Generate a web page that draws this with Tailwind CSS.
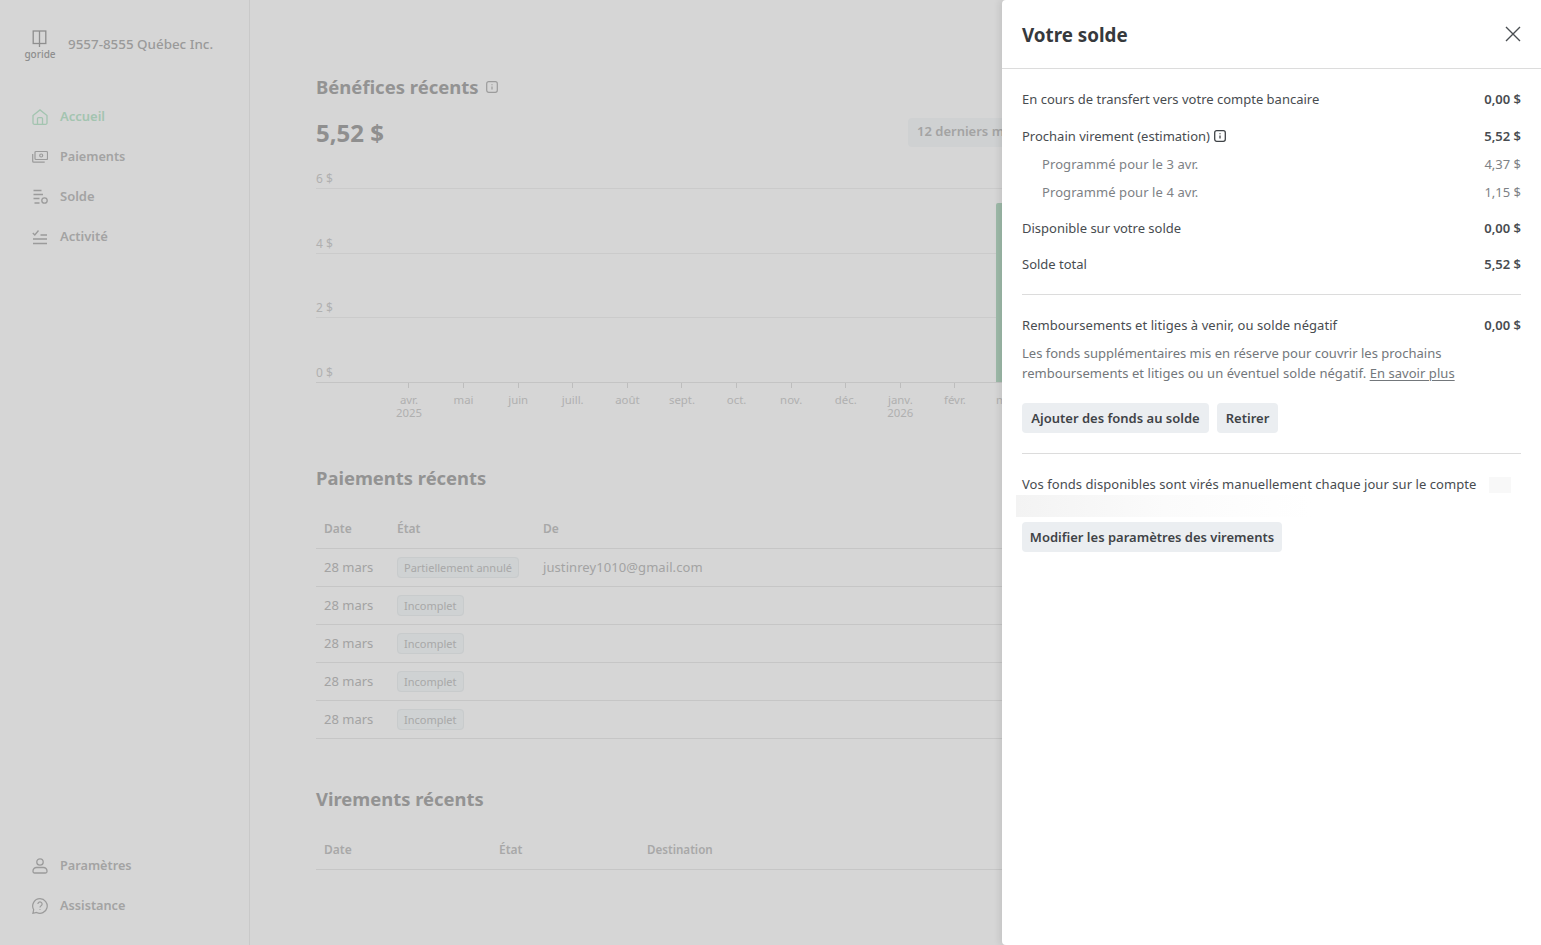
<!DOCTYPE html>
<html lang="fr">
<head>
  <meta charset="UTF-8" />
  <title>Votre solde</title>
  <meta name="viewport" content="width=device-width, initial-scale=1.0" />
  <script src="https://cdn.jsdelivr.net/npm/@tailwindcss/browser@4"></script>
</head>
<body class="h-[945px] overflow-hidden bg-[#d6d6d6] font-['Noto_Sans',sans-serif] text-[13px] text-[#a3a3a3]">
  <div class="relative flex h-[945px] overflow-hidden">

    <!-- Sidebar -->
    <aside class="flex h-full w-[250px] shrink-0 flex-col border-r border-[#c9c9c9] pb-[29px]">
      <div class="flex h-[88px] items-center pl-[24px] pt-[1px]">
        <div class="flex w-[32px] flex-col items-center">
          <svg class="mr-[2px] h-[18px] w-[15px]" viewBox="0 0 15 18" fill="none" stroke="#8e8e8e" stroke-width="1.3"><rect x="1.2" y="1" width="12.6" height="12.5"/><path d="M7.5 1v16"/></svg>
          <span class="mt-[1px] text-[10px] font-medium leading-[11px] text-[#8e8e8e]">goride</span>
        </div>
        <span class="ml-[12px] text-[13.4px] font-medium text-[#9a9a9a]">9557-8555 Québec Inc.</span>
      </div>
      <nav class="mt-[19px] flex flex-col gap-[20px] pl-[32px] text-[13px] font-semibold">
        <a class="flex h-[20px] items-center gap-[12px] text-[#a3c4b0]">
          <svg class="h-[16px] w-[16px]" viewBox="0 0 16 16" fill="none" stroke="#a3c4b0" stroke-width="1.3"><path d="M1 6.5 8 .9l7 5.6v7.4a1.4 1.4 0 0 1-1.4 1.4H2.4A1.4 1.4 0 0 1 1 13.900z"/><path d="M5.500 15.300V9.600a1 1 0 0 1 1-1h3a1 1 0 0 1 1 1v5.700"/></svg>
          Accueil
        </a>
        <a class="flex h-[20px] items-center gap-[12px] text-[12.7px]">
          <svg class="h-[16px] w-[16px]" viewBox="0 0 16 16" fill="none" stroke="#9b9b9b" stroke-width="1.2"><rect x="3" y="2.500" width="12.500" height="8" rx="1"/><circle cx="9.200" cy="6.500" r="1.500"/><path d="M.7 5v7.200a1 1 0 0 0 1 1h11"/></svg>
          Paiements
        </a>
        <a class="flex h-[20px] items-center gap-[12px]">
          <svg class="h-[16px] w-[16px]" viewBox="0 0 16 16" fill="none" stroke="#9b9b9b" stroke-width="1.300"><path d="M1.500 1.500h8M1.500 5.500h9.500M1.500 9.500h6M2.500 14h5"/><circle cx="12.500" cy="11.500" r="2.700"/></svg>
          Solde
        </a>
        <a class="flex h-[20px] items-center gap-[12px]">
          <svg class="h-[16px] w-[16px]" viewBox="0 0 16 16" fill="none" stroke="#9b9b9b" stroke-width="1.300"><path d="m.8 4 2 2 3.700-4.500M8.500 6h6.500M1 10h14M1 14.500h14"/></svg>
          Activité
        </a>
      </nav>
      <nav class="mt-auto flex flex-col gap-[20px] pl-[32px] text-[12.7px] font-semibold">
        <a class="flex h-[20px] items-center gap-[12px]">
          <svg class="h-[16px] w-[16px]" viewBox="0 0 16 16" fill="none" stroke="#9b9b9b" stroke-width="1.300"><circle cx="8" cy="4" r="3.200"/><path d="M1 13a3.500 3.500 0 0 1 3.500-3.500h7A3.500 3.500 0 0 1 15 13v.5a1.500 1.500 0 0 1-1.500 1.500h-11A1.500 1.500 0 0 1 1 13.500z"/></svg>
          Paramètres
        </a>
        <a class="flex h-[20px] items-center gap-[12px]">
          <svg class="h-[16px] w-[16px]" viewBox="0 0 16 16" fill="none" stroke="#9b9b9b" stroke-width="1.200"><path d="M8 .7a7.300 7.300 0 1 1-3.400 13.800L.9 15.300l.8-3.600A7.300 7.300 0 0 1 8 .7z"/><path d="M5.900 6a2.100 2.100 0 1 1 3.200 1.800c-.7.400-1.100.9-1.100 1.700"/><path d="M8 11.200v.9"/></svg>
          Assistance
        </a>
      </nav>
    </aside>

    <!-- Main content -->
    <main class="w-[1291px] shrink-0 pl-[66px] pr-[66px] pt-[74px]">
      <div class="flex h-[26px] items-center gap-[7px]">
        <h2 class="text-[18.5px] font-bold text-[#939393]">Bénéfices récents</h2>
        <svg class="h-[12px] w-[12px]" viewBox="0 0 12 12" fill="none" stroke="#9c9c9c" stroke-width="1.200"><rect x=".7" y=".7" width="10.600" height="10.600" rx="2"/><path d="M6 5.500v3M6 3.200v1"/></svg>
      </div>
      <div class="mt-[18px] flex h-[30px] w-[708px] items-center justify-between">
        <span class="text-[24px] font-bold text-[#8f8f8f]">5,52 $</span>
        <button class="mb-[2px] h-[29px] w-[116px] whitespace-nowrap rounded-[4px] bg-[#cfd1d2] px-[9px] text-left text-[13px] font-semibold text-[#a3a3a3]">12 derniers mois</button>
      </div>

      <!-- Chart -->
      <div class="relative mt-[23px] text-[12px] text-[#b0b0b0]">
        <div class="flex h-[16px] items-end"><span class="leading-[16px]">6 $</span></div>
        <div class="h-[2px] border-b border-[#cbcbcb]"></div>
        <div class="flex h-[65px] items-end border-b border-[#cbcbcb] pb-[1px]"><span class="leading-[16px]">4 $</span></div>
        <div class="flex h-[64px] items-end border-b border-[#cbcbcb] pb-[1px]"><span class="leading-[16px]">2 $</span></div>
        <div class="flex h-[65px] items-end border-b border-[#c4c4c4] pb-[1px]"><span class="leading-[16px]">0 $</span></div>
        <div class="absolute left-[680px] top-[32px] h-[179px] w-[10px] rounded-t-[2px] bg-[#9db9a8]"></div>
        <div class="flex pl-[65.700px] text-center text-[11.4px] leading-[13px]">
          <div class="w-[54.600px] shrink-0"><div class="mx-auto h-[5px] w-px bg-[#bdbdbd]"></div><div class="mt-[5px]">avr.<br>2025</div></div>
          <div class="w-[54.600px] shrink-0"><div class="mx-auto h-[5px] w-px bg-[#bdbdbd]"></div><div class="mt-[5px]">mai</div></div>
          <div class="w-[54.600px] shrink-0"><div class="mx-auto h-[5px] w-px bg-[#bdbdbd]"></div><div class="mt-[5px]">juin</div></div>
          <div class="w-[54.600px] shrink-0"><div class="mx-auto h-[5px] w-px bg-[#bdbdbd]"></div><div class="mt-[5px]">juill.</div></div>
          <div class="w-[54.600px] shrink-0"><div class="mx-auto h-[5px] w-px bg-[#bdbdbd]"></div><div class="mt-[5px]">août</div></div>
          <div class="w-[54.600px] shrink-0"><div class="mx-auto h-[5px] w-px bg-[#bdbdbd]"></div><div class="mt-[5px]">sept.</div></div>
          <div class="w-[54.600px] shrink-0"><div class="mx-auto h-[5px] w-px bg-[#bdbdbd]"></div><div class="mt-[5px]">oct.</div></div>
          <div class="w-[54.600px] shrink-0"><div class="mx-auto h-[5px] w-px bg-[#bdbdbd]"></div><div class="mt-[5px]">nov.</div></div>
          <div class="w-[54.600px] shrink-0"><div class="mx-auto h-[5px] w-px bg-[#bdbdbd]"></div><div class="mt-[5px]">déc.</div></div>
          <div class="w-[54.600px] shrink-0"><div class="mx-auto h-[5px] w-px bg-[#bdbdbd]"></div><div class="mt-[5px]">janv.<br>2026</div></div>
          <div class="w-[54.600px] shrink-0"><div class="mx-auto h-[5px] w-px bg-[#bdbdbd]"></div><div class="mt-[5px]">févr.</div></div>
          <div class="w-[54.600px] shrink-0"><div class="mx-auto h-[5px] w-px bg-[#bdbdbd]"></div><div class="mt-[5px]">mars</div></div>
        </div>
      </div>

      <!-- Paiements -->
      <h2 class="mt-[46px] text-[18.4px] font-bold leading-[26px] text-[#939393]">Paiements récents</h2>
      <div class="mt-[26px]">
        <div class="flex h-[32px] items-center border-b border-[#c6c6c6] pb-[7px] pl-[8px] text-[12px] font-semibold text-[#a8a8a8]">
          <span class="w-[73px]">Date</span><span class="w-[146px]">État</span><span>De</span>
        </div>
        <div class="flex h-[38px] items-center border-b border-[#c6c6c6] pl-[8px]">
          <span class="w-[73px]">28 mars</span>
          <span class="w-[146px]"><span class="rounded-[4px] border border-[#c8cbcc] bg-[#cfd2d3] px-[6px] py-[2px] text-[11px] text-[#a8a8a8]">Partiellement annulé</span></span>
          <span class="tracking-[0.08px]">justinrey1010@gmail.com</span>
        </div>
        <div class="flex h-[38px] items-center border-b border-[#c6c6c6] pl-[8px]">
          <span class="w-[73px]">28 mars</span>
          <span><span class="rounded-[4px] border border-[#c8cbcc] bg-[#cfd2d3] px-[6px] py-[2px] text-[11px] text-[#a8a8a8]">Incomplet</span></span>
        </div>
        <div class="flex h-[38px] items-center border-b border-[#c6c6c6] pl-[8px]">
          <span class="w-[73px]">28 mars</span>
          <span><span class="rounded-[4px] border border-[#c8cbcc] bg-[#cfd2d3] px-[6px] py-[2px] text-[11px] text-[#a8a8a8]">Incomplet</span></span>
        </div>
        <div class="flex h-[38px] items-center border-b border-[#c6c6c6] pl-[8px]">
          <span class="w-[73px]">28 mars</span>
          <span><span class="rounded-[4px] border border-[#c8cbcc] bg-[#cfd2d3] px-[6px] py-[2px] text-[11px] text-[#a8a8a8]">Incomplet</span></span>
        </div>
        <div class="flex h-[38px] items-center border-b border-[#c6c6c6] pl-[8px]">
          <span class="w-[73px]">28 mars</span>
          <span><span class="rounded-[4px] border border-[#c8cbcc] bg-[#cfd2d3] px-[6px] py-[2px] text-[11px] text-[#a8a8a8]">Incomplet</span></span>
        </div>
      </div>

      <!-- Virements -->
      <h2 class="mt-[47px] text-[18.4px] font-bold leading-[26px] text-[#939393]">Virements récents</h2>
      <div class="mt-[26px]">
        <div class="flex h-[32px] items-center border-b border-[#c6c6c6] pb-[7px] pl-[8px] text-[12px] font-semibold text-[#a8a8a8]">
          <span class="w-[175px]">Date</span><span class="w-[148px]">État</span><span class="text-[11.6px]">Destination</span>
        </div>
      </div>
    </main>

    <!-- Balance drawer -->
    <section class="absolute inset-y-0 right-0 w-[539px] rounded-l-[4px] bg-white text-[13px] text-[#484c50] shadow-[-3px_0_6px_rgba(0,0,0,0.08)]">
      <header class="flex h-[69px] items-center justify-between border-b border-[#dcdcdc] pl-[20px] pr-[20px]">
        <h2 class="pt-[2px] text-[18.8px] font-bold text-[#36393c]">Votre solde</h2>
        <svg class="h-[16px] w-[16px]" viewBox="0 0 16 16" fill="none" stroke="#4a4e52" stroke-width="1.400"><path d="m1 1 14 14M15 1 1 15"/></svg>
      </header>
      <div class="px-[20px] pt-[20px] leading-[20px]">
        <div class="flex justify-between"><span>En cours de transfert vers votre compte bancaire</span><span class="font-semibold">0,00 $</span></div>
        <div class="mt-[17px] flex justify-between">
          <span class="flex items-center gap-[4px]">Prochain virement (estimation)
            <svg class="h-[12px] w-[12px]" viewBox="0 0 12 12" fill="none" stroke="#3f4347" stroke-width="1.300"><rect x=".7" y=".7" width="10.600" height="10.600" rx="2"/><path d="M6 5.500v3M6 3.200v1"/></svg>
          </span>
          <span class="font-semibold">5,52 $</span>
        </div>
        <div class="mt-[8px] flex justify-between pl-[20px] text-[#7d8185]"><span class="tracking-[0.08px]">Programmé pour le 3 avr.</span><span>4,37 $</span></div>
        <div class="mt-[8px] flex justify-between pl-[20px] text-[#7d8185]"><span class="tracking-[0.08px]">Programmé pour le 4 avr.</span><span>1,15 $</span></div>
        <div class="mt-[16px] flex justify-between"><span>Disponible sur votre solde</span><span class="font-semibold">0,00 $</span></div>
        <div class="mt-[16px] flex justify-between"><span>Solde total</span><span class="font-semibold">5,52 $</span></div>

        <div class="mt-[20px] border-t border-[#dcdcdc]"></div>

        <div class="mt-[20px] flex justify-between"><span class="tracking-[0.06px]">Remboursements et litiges à venir, ou solde négatif</span><span class="font-semibold">0,00 $</span></div>
        <p class="mt-[8px] text-[#73777b]">Les fonds supplémentaires mis en réserve pour couvrir les prochains<br><span class="tracking-[0.05px]">remboursements et litiges ou un éventuel solde négatif. <a class="underline underline-offset-2">En savoir plus</a></span></p>
        <div class="mt-[20px] flex gap-[8px]">
          <button class="h-[30px] w-[187px] whitespace-nowrap rounded-[4px] bg-[#ebeef1] text-[13px] font-semibold text-[#3f4347]">Ajouter des fonds au solde</button>
          <button class="h-[30px] w-[61px] rounded-[4px] bg-[#ebeef1] text-[13px] font-semibold text-[#3f4347]">Retirer</button>
        </div>

        <div class="mt-[20px] border-t border-[#dcdcdc]"></div>

        <div class="relative mt-[20px] h-[40px]">
          <p class="tracking-[0.055px]">Vos fonds disponibles sont virés manuellement chaque jour sur le compte</p>
          <!-- masked account details -->
          <div class="absolute left-[467px] top-[3px] h-[16px] w-[22px] bg-[#f8f8f8]"></div>
          <div class="absolute left-[-6px] top-[21px] h-[22px] w-[295px] bg-gradient-to-r from-[#f3f3f3] via-[#fbfbfb] to-white"></div>
        </div>
        <button class="mt-[8px] h-[30px] w-[260px] whitespace-nowrap rounded-[4px] bg-[#ebeef1] text-[13px] font-semibold text-[#3f4347]">Modifier les paramètres des virements</button>
      </div>
    </section>
  </div>
</body>
</html>
